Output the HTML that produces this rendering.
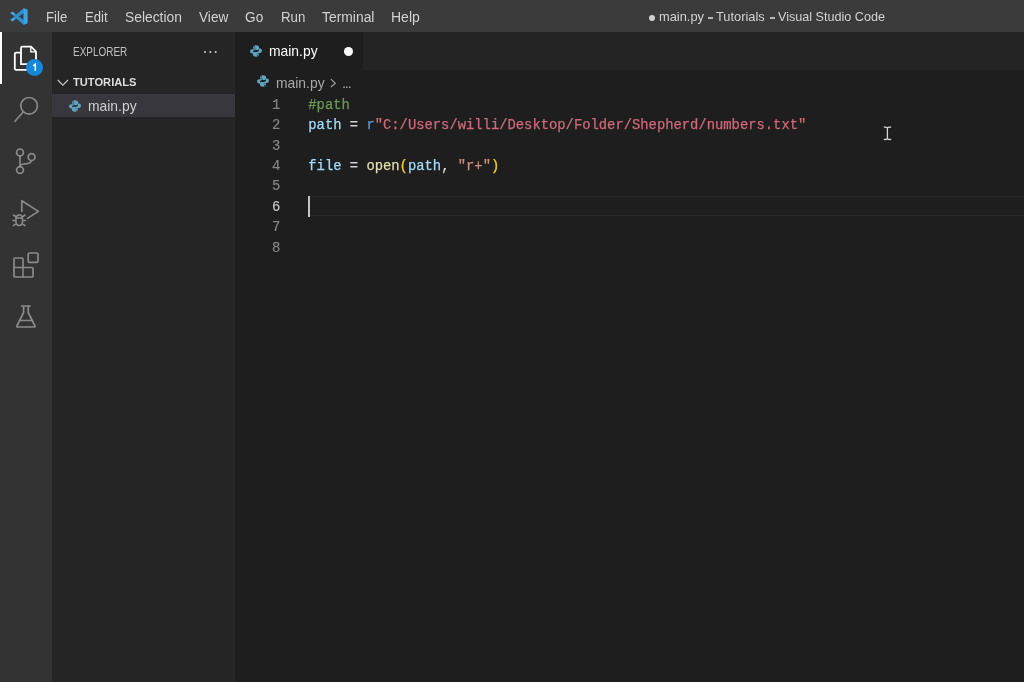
<!DOCTYPE html>
<html>
<head>
<meta charset="utf-8">
<title>main.py - Tutorials - Visual Studio Code</title>
<style>
*{box-sizing:border-box;margin:0;padding:0}
html,body{width:1024px;height:682px;overflow:hidden;background:#1e1e1e}
body{font-family:"Liberation Sans",sans-serif;color:#ccc;position:relative}
#root{position:absolute;left:0;top:0;width:1024px;height:682px;will-change:transform}
.a{position:absolute}
.t{position:absolute;white-space:pre;line-height:20px;height:20px}
#titlebar{left:0;top:0;width:1024px;height:32px;background:#3b3b3b}
#activity{left:0;top:32px;width:51.5px;height:650px;background:#333333}
#sidebar{left:51px;top:32px;width:184px;height:650px;background:#252526}
#tabs{left:235px;top:32px;width:789px;height:38px;background:#242425}
#tab{left:235px;top:32px;width:128px;height:38px;background:#1e1e1e}
.code,.ln{position:absolute;font-family:"Liberation Mono",monospace;font-size:13.83px;white-space:pre;line-height:20.43px;height:20.43px}
.code{-webkit-text-stroke:0.25px currentColor}
.ln{-webkit-text-stroke:0.2px currentColor}
.ln{color:#858585;text-align:right;width:30px;left:250.3px}
.c-com{color:#6a9955}.c-var{color:#a2dafa}.c-op{color:#d4d4d4}.c-kw{color:#569cd6}.c-str{color:#ce9178}.c-re{color:#d0687a}.c-fn{color:#dfdfb0}.c-br{color:#f5d21e}
</style>
</head>
<body>
<div id="root">
<div id="titlebar" class="a"></div>
<div id="sidebar" class="a"></div>
<div id="activity" class="a"></div>
<div id="tabs" class="a"></div>
<div id="tab" class="a"></div>
<div class="a" style="left:0;top:32px;width:2px;height:52px;background:#fff"></div>
<div class="a" style="left:52px;top:93.9px;width:183px;height:23.6px;background:#37373d"></div>

<svg class="a" style="left:9.5px;top:7.6px" width="18.2" height="17" viewBox="0 0 100 100" preserveAspectRatio="none">
  <path d="M75 1 L96 11 V89 L75 99 L34 62 L14 78 L2 71 L25 50 L2 29 L14 22 L34 38 Z M75 30 L48 50 L75 70 Z" fill="#2a90d2" fill-rule="evenodd"/>
  <path d="M75 1 L96 11 V89 L75 99 Z" fill="#3aa2e6"/>
  <path d="M2 29 L14 22 L28 33 L18 43 Z M2 71 L14 78 L28 67 L18 57 Z" fill="#48a8da"/>
</svg>


<svg class="a" style="left:0;top:32px" width="52" height="320" viewBox="0 32 52 320" fill="none" stroke="#8a8a8a" stroke-width="1.7" stroke-linecap="round" stroke-linejoin="round">
  <!-- explorer (active, white) -->
  <g stroke="#ffffff" stroke-width="1.8">
    <path d="M21 64.2 V48.2 Q21 46.7 22.5 46.7 H31 L36 51.7 V62.7 Q36 64.2 34.5 64.2 Z"/>
    <path d="M30.8 47 V51.9 H35.8" stroke-width="1.3"/>
    <path d="M21 52.6 H16.3 Q14.8 52.6 14.8 54.1 V68.4 Q14.8 69.9 16.3 69.9 H27"/>
  </g>
  <!-- search -->
  <circle cx="29.1" cy="105.8" r="8.3"/>
  <path d="M22.9 112.3 L15 121.3"/>
  <!-- source control -->
  <circle cx="20" cy="152.4" r="3.4"/>
  <circle cx="20" cy="170" r="3.4"/>
  <circle cx="31.6" cy="157.1" r="3.4"/>
  <path d="M20 156 V166.4"/>
  <path d="M31.2 160.8 C31 164 27 163.6 23.5 164 C21 164.4 20 165 20 166.4"/>
  <!-- debug -->
  <path d="M21.8 211.2 V200.7 L38.4 211.4 L27.5 218.4"/>
  <g stroke-width="1.55">
  <path d="M15.9 219.4 C15.9 213.4 22.5 213.4 22.5 219.4 V221.2 C22.5 226.8 15.9 226.8 15.9 221.2 Z"/>
  <path d="M15.9 217.9 H22.5"/>
  <path d="M13.4 215 L15.6 216.5 M25 215 L22.8 216.5 M13 220.4 H15.6 M22.8 220.4 H25.4 M13.4 225.6 L15.6 224.1 M25 225.6 L22.8 224.1"/>
  </g>
  <!-- extensions -->
  <path d="M14 276 V259 Q14 258 15 258 H22 Q23 258 23 259 V267.5 H32 Q33 267.5 33 268.5 V276 Q33 277 32 277 H15 Q14 277 14 276 Z"/>
  <path d="M14 267.5 H23 V277" stroke-width="1.5"/>
  <rect x="28.2" y="253" width="9.8" height="9.4" rx="1.2"/>
  <!-- flask -->
  <path d="M21.6 306 H30.2"/>
  <path d="M23.6 306.4 V312.5 L16.9 326 Q16.5 327 17.6 327 H34.3 Q35.4 327 35 326 L28.2 312.5 V306.4"/>
  <path d="M20 320.6 H31.8" stroke-width="1.5"/>
</svg>
<div class="a" style="left:26px;top:58.7px;width:17px;height:17px;border-radius:50%;background:#1887d8"></div>
<svg class="a" style="left:30px;top:62px" width="10" height="11" viewBox="30 62 10 11" fill="none" stroke="#fff" stroke-width="1.5"><path d="M33.2 65.8 L35.3 64.2 V70.7"/></svg>

<div class="a" style="left:648.7px;top:14.9px;width:6px;height:6px;border-radius:50%;background:#d2d2d2"></div>
<div class="a" style="left:708.2px;top:17.3px;width:4.8px;height:1.3px;background:#b4b4b4"></div>
<div class="a" style="left:770.2px;top:17.3px;width:4.8px;height:1.3px;background:#b4b4b4"></div>
<div class="t" id="m1" style="left:45.69px;top:7.15px;font-size:14px;letter-spacing:0.000px;color:#d2d2d2;transform-origin:0 0;transform:scaleX(0.9394)">File</div>
<div class="t" id="m2" style="left:85.20px;top:7.15px;font-size:14px;letter-spacing:0.000px;color:#d2d2d2;transform-origin:0 0;transform:scaleX(0.9402)">Edit</div>
<div class="t" id="m3" style="left:125.06px;top:7.15px;font-size:14px;letter-spacing:0.000px;color:#d2d2d2;transform-origin:0 0;transform:scaleX(0.9875)">Selection</div>
<div class="t" id="m4" style="left:198.86px;top:7.15px;font-size:14px;letter-spacing:0.000px;color:#d2d2d2;transform-origin:0 0;transform:scaleX(0.9761)">View</div>
<div class="t" id="m5" style="left:244.79px;top:7.15px;font-size:14px;letter-spacing:0.000px;color:#d2d2d2;transform-origin:0 0;transform:scaleX(0.9765)">Go</div>
<div class="t" id="m6" style="left:280.67px;top:7.15px;font-size:14px;letter-spacing:0.000px;color:#d2d2d2;transform-origin:0 0;transform:scaleX(0.9467)">Run</div>
<div class="t" id="m7" style="left:321.88px;top:7.15px;font-size:14px;letter-spacing:0.000px;color:#d2d2d2;transform-origin:0 0;transform:scaleX(0.9914)">Terminal</div>
<div class="t" id="m8" style="left:390.56px;top:7.15px;font-size:14px;letter-spacing:0.000px;color:#d2d2d2;transform-origin:0 0;transform:scaleX(1.0001)">Help</div>
<div class="t" id="t1" style="left:658.80px;top:6.76px;font-size:13.4px;letter-spacing:0.000px;color:#d2d2d2;transform-origin:0 0;transform:scaleX(0.9586)">main.py</div>
<div class="t" id="t3" style="left:716.36px;top:6.76px;font-size:13.4px;letter-spacing:0.000px;color:#d2d2d2;transform-origin:0 0;transform:scaleX(0.9590)">Tutorials</div>
<div class="t" id="t5" style="left:777.72px;top:6.76px;font-size:13.4px;letter-spacing:0.000px;color:#d2d2d2;transform-origin:0 0;transform:scaleX(0.9414)">Visual Studio Code</div>
<div class="t" id="s1" style="left:72.59px;top:41.75px;font-size:12.3px;letter-spacing:0.000px;color:#c0c0c0;transform-origin:0 0;transform:scaleX(0.8097)">EXPLORER</div>
<div class="t" id="s2" style="left:73.32px;top:72.42px;font-size:11.5px;letter-spacing:0.000px;color:#dcdcdc;font-weight:bold;transform-origin:0 0;transform:scaleX(0.9687)">TUTORIALS</div>
<div class="t" id="s3" style="left:87.55px;top:96.08px;font-size:14.5px;letter-spacing:0.000px;color:#cfcfcf;transform-origin:0 0;transform:scaleX(0.9565)">main.py</div>
<div class="t" id="tb" style="left:269.00px;top:41.23px;font-size:14.5px;letter-spacing:0.000px;color:#ffffff;transform-origin:0 0;transform:scaleX(0.9566)">main.py</div>
<div class="t" id="bc" style="left:275.54px;top:73.18px;font-size:14.5px;letter-spacing:0.000px;color:#a8a8a8;transform-origin:0 0;transform:scaleX(0.9574)">main.py</div>
<div class="t" id="bd" style="left:341.94px;top:73.18px;font-size:14.5px;letter-spacing:-1.103px;color:#a8a8a8">...</div>

<!-- sidebar -->
<div class="a" style="left:203.6px;top:50.6px;width:2.5px;height:2.5px;border-radius:50%;background:#d0d0d0;box-shadow:5.35px 0 0 #d0d0d0,10.7px 0 0 #d0d0d0"></div>
<svg class="a" style="left:56px;top:77px" width="14" height="12" viewBox="56 77 14 12" fill="none" stroke="#c8c8c8" stroke-width="1.2"><path d="M57.8 80 L62.9 85.2 L68 80"/></svg>
<svg class="a" style="left:69.30px;top:99.60px" width="12.00" height="12.00" viewBox="0 0 16 16" fill="#5fa5c2" fill-rule="evenodd"><path d="M7.9 0.3C5.6 0.3 4.3 1.3 4.3 2.9V4.9H8.1V5.5H2.8C1.1 5.5 0.1 6.7 0.1 8.3C0.1 10 1.1 11.2 2.8 11.2H4.1V9.2C4.1 7.7 5.3 6.6 6.8 6.6H10.2C11.3 6.6 12.1 5.8 12.1 4.7V2.9C12.1 1.4 10.5 0.3 7.9 0.3ZM6 1.6A.75.75 0 1 1 6 3.1A.75.75 0 1 1 6 1.6Z"/><g transform="rotate(180 8 8)"><path d="M7.9 0.3C5.6 0.3 4.3 1.3 4.3 2.9V4.9H8.1V5.5H2.8C1.1 5.5 0.1 6.7 0.1 8.3C0.1 10 1.1 11.2 2.8 11.2H4.1V9.2C4.1 7.7 5.3 6.6 6.8 6.6H10.2C11.3 6.6 12.1 5.8 12.1 4.7V2.9C12.1 1.4 10.5 0.3 7.9 0.3ZM6 1.6A.75.75 0 1 1 6 3.1A.75.75 0 1 1 6 1.6Z"/></g></svg>
<svg class="a" style="left:250.40px;top:45.00px" width="12.00" height="12.00" viewBox="0 0 16 16" fill="#5fa5c2" fill-rule="evenodd"><path d="M7.9 0.3C5.6 0.3 4.3 1.3 4.3 2.9V4.9H8.1V5.5H2.8C1.1 5.5 0.1 6.7 0.1 8.3C0.1 10 1.1 11.2 2.8 11.2H4.1V9.2C4.1 7.7 5.3 6.6 6.8 6.6H10.2C11.3 6.6 12.1 5.8 12.1 4.7V2.9C12.1 1.4 10.5 0.3 7.9 0.3ZM6 1.6A.75.75 0 1 1 6 3.1A.75.75 0 1 1 6 1.6Z"/><g transform="rotate(180 8 8)"><path d="M7.9 0.3C5.6 0.3 4.3 1.3 4.3 2.9V4.9H8.1V5.5H2.8C1.1 5.5 0.1 6.7 0.1 8.3C0.1 10 1.1 11.2 2.8 11.2H4.1V9.2C4.1 7.7 5.3 6.6 6.8 6.6H10.2C11.3 6.6 12.1 5.8 12.1 4.7V2.9C12.1 1.4 10.5 0.3 7.9 0.3ZM6 1.6A.75.75 0 1 1 6 3.1A.75.75 0 1 1 6 1.6Z"/></g></svg>
<svg class="a" style="left:257.00px;top:75.00px" width="12.00" height="12.00" viewBox="0 0 16 16" fill="#5fa5c2" fill-rule="evenodd"><path d="M7.9 0.3C5.6 0.3 4.3 1.3 4.3 2.9V4.9H8.1V5.5H2.8C1.1 5.5 0.1 6.7 0.1 8.3C0.1 10 1.1 11.2 2.8 11.2H4.1V9.2C4.1 7.7 5.3 6.6 6.8 6.6H10.2C11.3 6.6 12.1 5.8 12.1 4.7V2.9C12.1 1.4 10.5 0.3 7.9 0.3ZM6 1.6A.75.75 0 1 1 6 3.1A.75.75 0 1 1 6 1.6Z"/><g transform="rotate(180 8 8)"><path d="M7.9 0.3C5.6 0.3 4.3 1.3 4.3 2.9V4.9H8.1V5.5H2.8C1.1 5.5 0.1 6.7 0.1 8.3C0.1 10 1.1 11.2 2.8 11.2H4.1V9.2C4.1 7.7 5.3 6.6 6.8 6.6H10.2C11.3 6.6 12.1 5.8 12.1 4.7V2.9C12.1 1.4 10.5 0.3 7.9 0.3ZM6 1.6A.75.75 0 1 1 6 3.1A.75.75 0 1 1 6 1.6Z"/></g></svg>
<div class="a" style="left:343.7px;top:47.1px;width:9px;height:9px;border-radius:50%;background:#fff"></div>
<svg class="a" style="left:328px;top:77px" width="10" height="12" viewBox="328 77 10 12" fill="none" stroke="#a8a8a8" stroke-width="1.1"><path d="M330.8 79.2 L335.3 83.2 L330.8 87.2"/></svg>
<!-- editor -->
<div class="a" style="left:308px;top:196.3px;width:716px;height:19.6px;border-top:1px solid #2a2a2a;border-bottom:1px solid #2a2a2a"></div>
<div class="ln" style="top:94.70px">1</div>
<div class="ln" style="top:115.13px">2</div>
<div class="ln" style="top:135.56px">3</div>
<div class="ln" style="top:155.99px">4</div>
<div class="ln" style="top:176.42px">5</div>
<div class="ln" style="top:196.85px;color:#c6c6c6">6</div>
<div class="ln" style="top:217.28px">7</div>
<div class="ln" style="top:237.71px">8</div>

<div class="code" style="left:308.30px;top:94.70px;letter-spacing:0.001px"><span class="c-com">#path</span></div>
<div class="code" style="left:308.30px;top:115.13px;letter-spacing:0.001px"><span class="c-var">path</span><span class="c-op"> = </span><span class="c-kw">r</span><span class="c-re">"C:/Users/willi/Desktop/Folder/Shepherd/numbers.txt"</span></div>
<div class="code" style="left:308.30px;top:155.99px;letter-spacing:0.001px"><span class="c-var">file</span><span class="c-op"> = </span><span class="c-fn">open</span><span class="c-br">(</span><span class="c-var">path</span><span class="c-op">, </span><span class="c-str">"r+"</span><span class="c-br">)</span></div>

<div class="a" style="left:308.3px;top:196.1px;width:2.1px;height:20.6px;background:#c4c4c4"></div>
<!-- mouse I-beam -->
<svg class="a" style="left:882px;top:125px" width="11" height="17" viewBox="882 125 11 17" fill="none" stroke="#d4d4d4" stroke-width="1.3"><path d="M887.4 127.6 V139 M883.8 127.2 Q886.6 126.8 887.4 128 Q888.2 126.8 891.2 127.2 M883.8 139.4 Q886.6 139.8 887.4 138.6 Q888.2 139.8 891.2 139.4"/></svg>
</div>
</body>
</html>
